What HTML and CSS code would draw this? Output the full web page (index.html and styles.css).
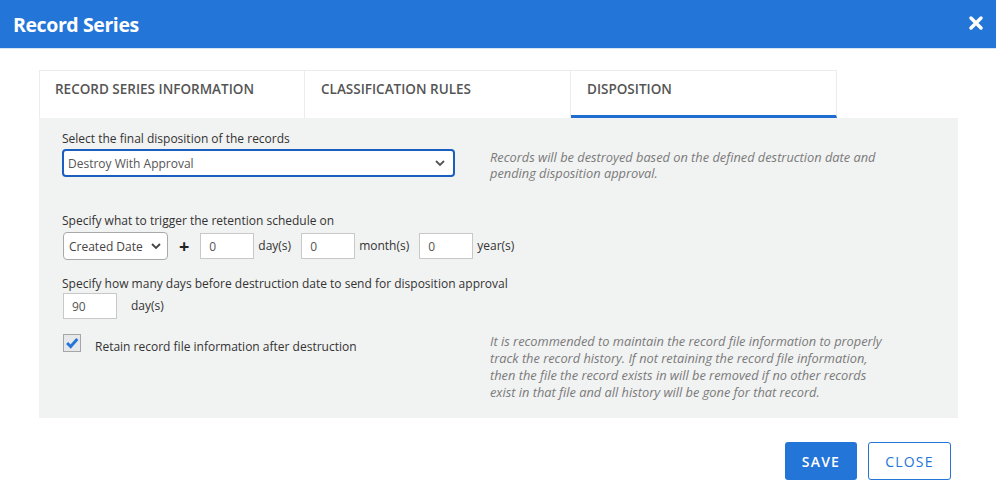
FILE: index.html
```html
<!DOCTYPE html>
<html>
<head>
<meta charset="utf-8">
<link rel="stylesheet" href="styles.css">
</head>
<body>
<div class="dialog">
  <header class="header">
    <h1 class="title">Record Series</h1>
    <span class="close-x">
      <svg width="14" height="14" viewBox="0 0 14 14"><path d="M2 2 L12 12 M12 2 L2 12" stroke="#fff" stroke-width="3.4" stroke-linecap="round"/></svg>
    </span>
  </header>
  <main class="content">
    <nav class="tabs">
      <div class="tab">RECORD SERIES INFORMATION</div>
      <div class="tab">CLASSIFICATION RULES</div>
      <div class="tab active">DISPOSITION</div>
    </nav>
    <section class="panel">
      <div class="row row-first">
        <div class="left">
          <div class="label">Select the final disposition of the records</div>
          <div class="select select-main">
            <span>Destroy With Approval</span>
            <svg class="chev" width="10" height="7" viewBox="0 0 10 7"><path d="M1 1 L5 5 L9 1" fill="none" stroke="#555" stroke-width="1.8"/></svg>
          </div>
        </div>
        <p class="help help-first">Records will be destroyed based on the defined destruction date and pending disposition approval.</p>
      </div>
      <div class="block block-trigger">
        <div class="label">Specify what to trigger the retention schedule on</div>
        <div class="controls">
          <div class="select select-small">
            <span>Created Date</span>
            <svg class="chev" width="10" height="7" viewBox="0 0 10 7"><path d="M1 1 L5 5 L9 1" fill="none" stroke="#444" stroke-width="1.8"/></svg>
          </div>
          <span class="plus">+</span>
          <div class="input">0</div><span class="unit">day(s)</span>
          <div class="input">0</div><span class="unit">month(s)</span>
          <div class="input">0</div><span class="unit">year(s)</span>
        </div>
      </div>
      <div class="block block-days">
        <div class="label">Specify how many days before destruction date to send for disposition approval</div>
        <div class="controls">
          <div class="input">90</div><span class="unit unit-wide">day(s)</span>
        </div>
      </div>
      <div class="row row-last">
        <div class="left check-row">
          <span class="checkbox">
            <svg width="18" height="18" viewBox="0 0 18 18"><path d="M3.5 9 L7.5 13 L15 4.5" fill="none" stroke="#2475d8" stroke-width="3.2"/></svg>
          </span>
          <span class="check-label">Retain record file information after destruction</span>
        </div>
        <p class="help help-last">It is recommended to maintain the record file information to properly track the record history. If not retaining the record file information, then the file the record exists in will be removed if no other records exist in that file and all history will be gone for that record.</p>
      </div>
    </section>
    <footer class="footer">
      <button class="btn btn-primary">SAVE</button>
      <button class="btn btn-outline">CLOSE</button>
    </footer>
  </main>
</div>
</body>
</html>
```
FILE: styles.css
```css
* { box-sizing: border-box; }
html, body { margin: 0; padding: 0; background: #fff; }
body { font-family: "Open Sans", "Liberation Sans", sans-serif; color: #333; width: 996px; height: 502px; overflow: hidden; }

.header {
  height: 49px;
  background: #2475d8;
  display: flex;
  align-items: center;
  justify-content: space-between;
  padding: 0 13px 0 13px;
  border-bottom: 1px solid #d7e4f5;
}
.title { margin: 0; font-size: 19.5px; font-weight: 700; color: #fff; letter-spacing: -0.4px; }
.close-x { display: flex; align-items: center; margin-top: -2px; }

.content { padding: 21px 38px 0 39px; }

.tabs { display: flex; }
.tab {
  width: 266px;
  height: 48px;
  background: #fff;
  border: 1px solid #ececec;
  border-bottom: none;
  border-left: none;
  padding: 0 16px;
  display: flex;
  align-items: center;
  padding-bottom: 11px;
  font-size: 13.5px;
  font-weight: 600;
  color: #555;
}
.tab:first-child { border-left: 1px solid #ececec; padding-left: 15px; }
.tab.active { border-bottom: 3px solid #1f6cd1; padding-bottom: 8px; }

.panel {
  background: #f1f2f2;
  padding: 13px 23px 17px 23px;
  display: flex;
  flex-direction: column;
}
.row { display: flex; }
.left { width: 428px; flex: none; }
.label { font-size: 12px; line-height: 16px; color: #333; margin-bottom: 2px; }
.help { margin: 0; font-size: 12.8px; font-style: italic; color: #7a7a7a; }
.help-first { line-height: 16px; padding-top: 18px; width: 400px; }
.help-last { line-height: 17px; width: 400px; }

.select {
  background: #fff;
  display: flex;
  align-items: center;
  justify-content: space-between;
  font-size: 12px;
  color: #555;
}
.select-main {
  width: 393px;
  height: 28px;
  border: 2px solid #1a5fc0;
  border-radius: 4px;
  padding: 0 8px 0 4px;
}
.select-small {
  width: 105px;
  height: 28px;
  border: 1px solid #a8a8a8;
  border-radius: 4px;
  padding: 0 6px 0 5px;
  color: #444;
}

.block-trigger { margin-top: 32px; }
.block-trigger .label { margin-bottom: 3px; }
.block-days { margin-top: 16px; }
.block-days .label { margin-bottom: 1px; }
.controls { display: flex; align-items: center; padding-left: 1px; }
.plus { font-size: 18px; font-weight: 700; color: #222; margin: 0 11px 0 11px; line-height: 1; }
.input {
  width: 54px;
  height: 26px;
  background: #fff;
  border: 1px solid #c8c8c8;
  font-size: 12px;
  color: #555;
  display: flex;
  align-items: center;
  padding-left: 8px;
}
.unit { font-size: 12px; color: #333; margin: 0 10px 2px 4px; }
.unit-wide { margin-left: 14px; }

.row-last { margin-top: 14px; }
.check-row { display: flex; align-items: flex-start; padding-left: 1px; }
.checkbox {
  width: 18px;
  height: 18px;
  border: 1px solid #a6a6a6;
  background: #e6e8ea;
  display: flex;
  align-items: center;
  justify-content: center;
  margin-top: 1px;
}
.check-label { font-size: 12px; line-height: 17px; margin-left: 14px; margin-top: 5px; color: #333; }

.footer { display: flex; justify-content: flex-end; gap: 11px; padding: 24px 7px 0 0; }
.btn {
  height: 38px;
  font-family: "Open Sans", "Liberation Sans", sans-serif;
  font-size: 14px;
  font-weight: 600;
  letter-spacing: 1.2px;
  border-radius: 3px;
  cursor: pointer;
}
.btn-primary { width: 72px; background: #2475d8; color: #fff; border: none; }
.btn-outline { width: 83px; background: #fff; color: #2475d8; border: 1px solid #2475d8; font-weight: 400; }
```
